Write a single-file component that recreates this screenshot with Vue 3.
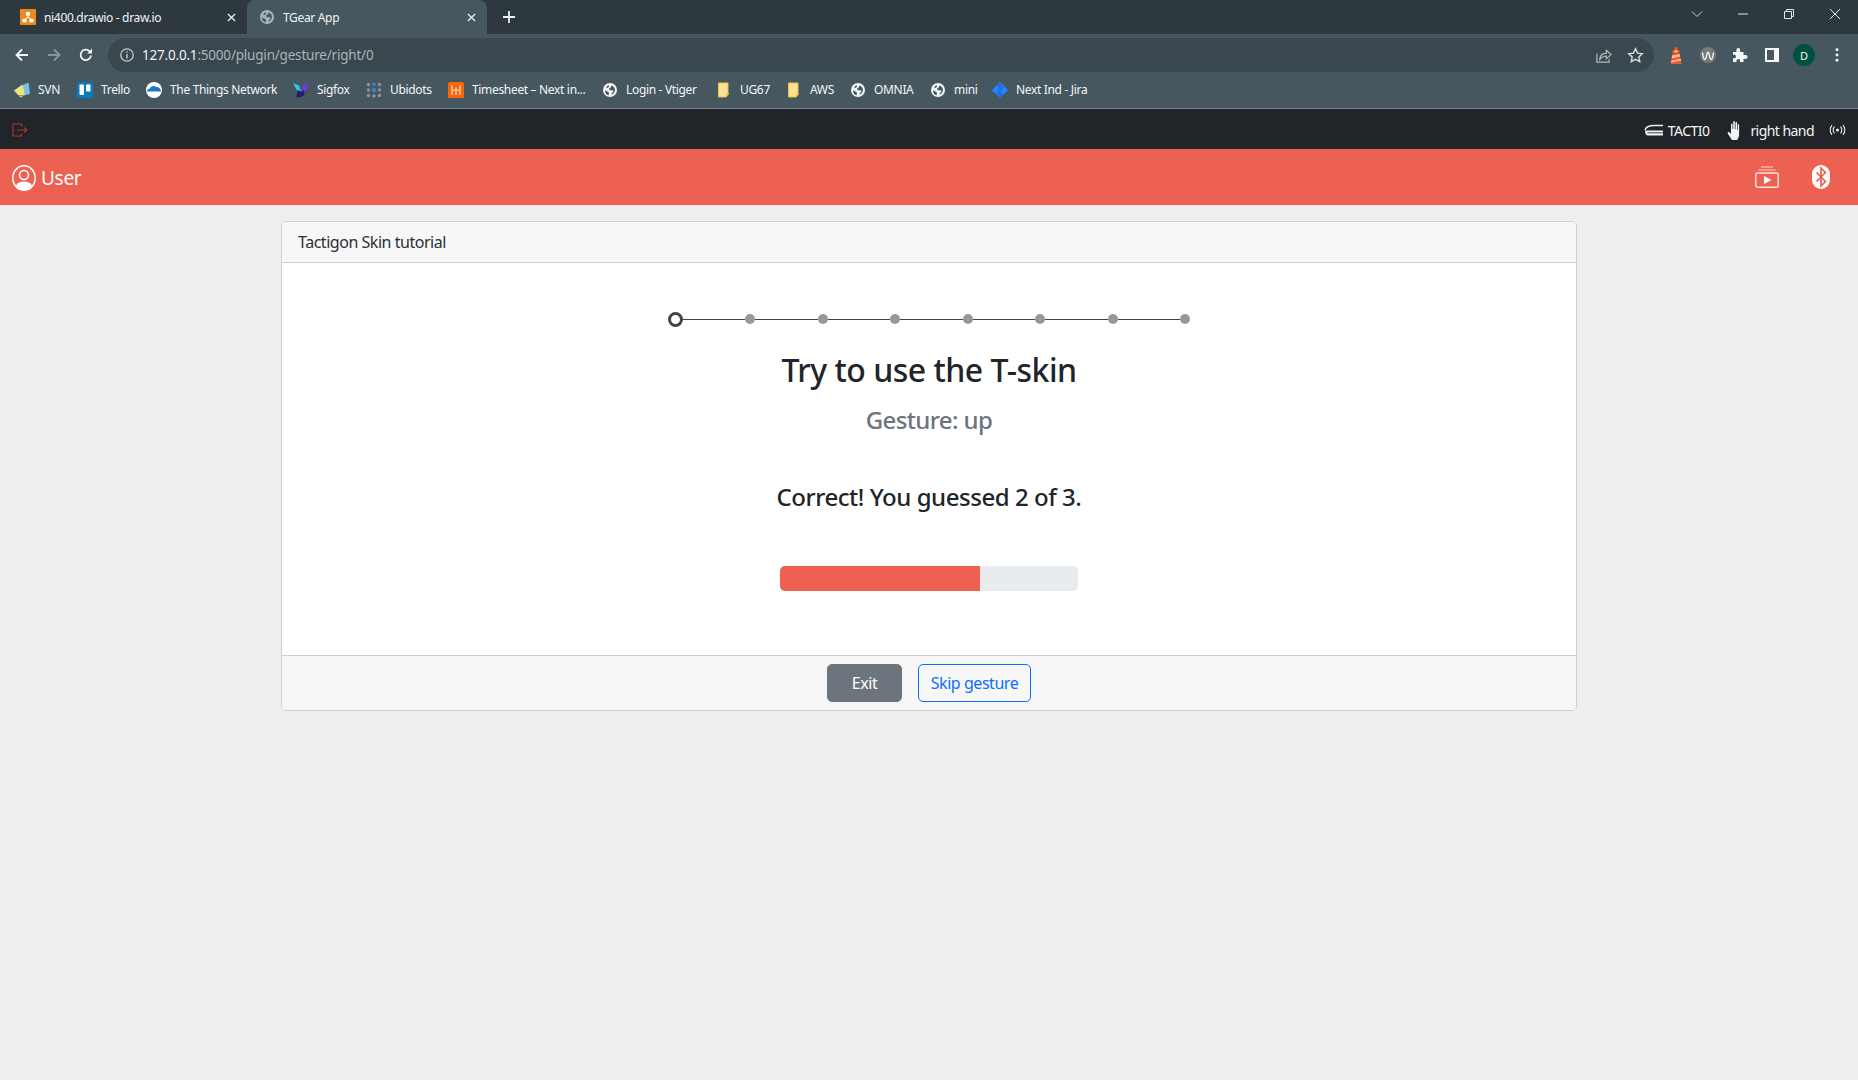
<script setup>
const bookmarks = [
  { name: 'SVN', icon: 'svn', width: 63 },
  { name: 'Trello', icon: 'trello', width: 69 },
  { name: 'The Things Network', icon: 'ttn', width: 147 },
  { name: 'Sigfox', icon: 'sigfox', width: 73 },
  { name: 'Ubidots', icon: 'ubidots', width: 82 },
  { name: 'Timesheet – Next in...', icon: 'hours', width: 154 },
  { name: 'Login - Vtiger', icon: 'globe', width: 114 },
  { name: 'UG67', icon: 'folder', width: 70 },
  { name: 'AWS', icon: 'folder', width: 64 },
  { name: 'OMNIA', icon: 'globe', width: 80 },
  { name: 'mini', icon: 'globe', width: 62 },
  { name: 'Next Ind - Jira', icon: 'jira', width: 120 }
]
const steps = [1, 2, 3, 4, 5, 6, 7]
const globe = 'M8 1a7 7 0 1 0 0 14A7 7 0 0 0 8 1Zm-1 2.2v1.5L5.6 6 4 5.2A5.2 5.2 0 0 1 7 3.2Zm-4 5 2 1.4 1.4.2.6 1.6-.6 2A5.3 5.3 0 0 1 3 8.2Zm6.4 4.6.6-1.8 1.6-1.2-.8-1.6H7.6L7 6.8l1.6-1.4 1-1.8A5.2 5.2 0 0 1 13 8c0 2-1.400 3.800-3.600 4.800Z'
</script>

<template>
  <div class="page">
    <header class="browser">
      <div class="tabstrip">
        <div class="tab">
          <svg class="fav" viewBox="0 0 16 16"><rect width="16" height="16" rx="1" fill="#ee8a1c"/><path d="M8 6v3M4 11l4-3 4 3" fill="none" stroke="#fff" stroke-width="1"/><rect x="6" y="3" width="4" height="3.500" fill="#fff"/><rect x="2.500" y="9.800" width="4" height="3.500" fill="#fff"/><rect x="9.500" y="9.800" width="4" height="3.500" fill="#fff"/></svg>
          <span class="tab-title">ni400.drawio - draw.io</span>
          <svg class="tab-x" viewBox="0 0 10 10"><path d="M1 1l8 8M9 1l-8 8" stroke="#e8eaed" stroke-width="1.500"/></svg>
        </div>
        <div class="tab active">
          <svg class="fav" viewBox="0 0 16 16"><path :d="globe" fill="#a9b3b8" fill-rule="evenodd"/></svg>
          <span class="tab-title">TGear App</span>
          <svg class="tab-x" viewBox="0 0 10 10"><path d="M1 1l8 8M9 1l-8 8" stroke="#e8eaed" stroke-width="1.500"/></svg>
        </div>
        <svg class="newtab" viewBox="0 0 12 12"><path d="M6 0v12M0 6h12" stroke="#eef0f1" stroke-width="1.800"/></svg>
        <div class="winctl">
          <svg viewBox="0 0 12 12" class="wc"><path d="M1 3.500l5 5 5-5" fill="none" stroke="#c8ced1"/></svg>
          <svg viewBox="0 0 12 12" class="wc"><path d="M1 6h10" stroke="#e2e5e7"/></svg>
          <svg viewBox="0 0 12 12" class="wc"><path d="M1.500 3.500h7v7h-7zM3.500 3.500v-2h7v7h-2" fill="none" stroke="#e2e5e7"/></svg>
          <svg viewBox="0 0 12 12" class="wc"><path d="M1 1l10 10M11 1L1 11" stroke="#e2e5e7"/></svg>
        </div>
      </div>

      <div class="toolbar">
        <div class="nav-btns">
          <svg viewBox="0 0 16 16" class="nb"><path d="M14 8H3M8 2.500 2.500 8 8 13.500" fill="none" stroke="#f2f4f5" stroke-width="1.800"/></svg>
          <svg viewBox="0 0 16 16" class="nb"><path d="M2 8h11M8 2.500 13.500 8 8 13.500" fill="none" stroke="#8b969b" stroke-width="1.800"/></svg>
          <svg viewBox="0 0 16 16" class="nb"><path d="M13 8.500A5.200 5.200 0 1 1 11.500 4.200" fill="none" stroke="#f2f4f5" stroke-width="1.800"/><path d="M14 1.500V6.500H9Z" fill="#f2f4f5"/></svg>
        </div>
        <div class="omnibox">
          <svg viewBox="0 0 16 16" class="info"><circle cx="8" cy="8" r="6.200" fill="none" stroke="#c5cbce" stroke-width="1.300"/><path d="M8 7v4.500M8 4.300v1.500" stroke="#c5cbce" stroke-width="1.400"/></svg>
          <span class="url"><b>127.0.0.1</b>:5000/plugin/gesture/right/0</span>
          <svg viewBox="0 0 18 18" class="omni-ic share"><path d="M2 7v9h13v-3" fill="none" stroke="#b9c1c4" stroke-width="1.200"/><path d="M5 13c0-4 3-6.500 7-6.500V3.500l5 4.500-5 4.500V9.500c-3 0-5 1-7 3.500Z" fill="none" stroke="#b9c1c4" stroke-width="1.200"/></svg>
          <svg viewBox="0 0 18 18" class="omni-ic"><path d="M9 1.800l2.200 4.700 5 .6-3.700 3.500 1 5L9 13.100l-4.500 2.500 1-5L1.800 7.100l5-.6Z" fill="none" stroke="#d5dadc" stroke-width="1.500"/></svg>
        </div>
        <div class="ext">
          <svg viewBox="0 0 12 17" class="lighthouse"><path d="M5 0h2l.8 2.500 1.700 1V6h-7V3.500l1.700-1Z" fill="#f0552c"/><rect x="4.500" y="3.500" width="3" height="2" fill="#ffd54a"/><path d="M2.500 6.500h7L11.500 17H.5Z" fill="#f15a30"/><path d="M2.200 8.500 9.700 7l.4 2.600-8.300 2ZM1.300 13.800l9.500-2 .3 1.800-10 2Z" fill="#ffbf9c"/></svg>
          <svg viewBox="0 0 16 16" class="wave"><circle cx="8" cy="8" r="8" fill="#77797a"/><path d="M2.500 5.500c1 8.500 3 8.500 4 3.500s2-5 3 0c1 5 3 5 4-3.500" fill="none" stroke="#f1f1f1" stroke-width="1.400"/></svg>
          <svg viewBox="0 0 16 16" class="puzzle"><path d="M1 5h3.500C4 2.500 5 1 6.300 1s2.300 1.500 1.700 4h3.500v3.300c2.300-.6 4-.3 4 1.700s-1.700 2.300-4 1.700V15H8c.5-2-.5-3-1.700-3s-2.200 1-1.700 3H1v-3.800c2 .5 3-.3 3-1.700S3 7.500 1 8Z" fill="#f5f6f7"/></svg>
          <svg viewBox="0 0 14 14" class="panel"><path fill-rule="evenodd" d="M0 0h14v14H0Zm2 2v10h7V2Z" fill="#f7f8f8"/></svg>
          <span class="avatar">D</span>
          <svg viewBox="0 0 4 16" class="dots"><circle cx="2" cy="2" r="1.700" fill="#f2f4f5"/><circle cx="2" cy="8" r="1.700" fill="#f2f4f5"/><circle cx="2" cy="14" r="1.700" fill="#f2f4f5"/></svg>
        </div>
      </div>

      <div class="bookmarks">
        <div v-for="b in bookmarks" :key="b.name" class="bm" :style="{ width: b.width + 'px' }">
          <svg viewBox="0 0 16 16" class="bm-ic">
            <template v-if="b.icon === 'svn'">
              <path d="M9 3l5.500-2.500L16 12l-7 1.500Z" fill="#74c2ee"/><path d="M0 8.500 8.500 2.500l2.500 10.500H4Z" fill="#eee37f"/><path d="M4 13.500h6l-3 2Z" fill="#cfdc7c"/>
            </template>
            <template v-else-if="b.icon === 'trello'">
              <rect width="16" height="16" rx="2" fill="#0a79bf"/><rect x="2.500" y="2.500" width="4.500" height="10.500" rx=".8" fill="#fff"/><rect x="9" y="2.500" width="4.500" height="7" rx=".8" fill="#fff"/>
            </template>
            <template v-else-if="b.icon === 'ttn'">
              <circle cx="8" cy="8" r="8" fill="#fff"/><path d="M1 9.500c0-2 1.500-3 3-3 .5-2.500 4-3.500 6-1.500 2-.5 5 1 5 4.500Z" fill="#1b77c9"/>
            </template>
            <template v-else-if="b.icon === 'sigfox'">
              <path d="M0 1l6 2.500 2 6L4 8.500Z" fill="#2cc4f0"/><path d="M16 1l-6 2.500L8 9.500l5-1Z" fill="#6a3de8"/><path d="M5 8l3 2 3-2 .5 5L8 15l-5 .5Z" fill="#241a72"/>
            </template>
            <template v-else-if="b.icon === 'ubidots'">
              <g fill="#8b9499"><circle cx="2.500" cy="2.500" r="1.700"/><circle cx="13.500" cy="2.500" r="1.700"/><circle cx="2.500" cy="8" r="1.700"/><circle cx="13.500" cy="8" r="1.700"/><circle cx="2.500" cy="13.500" r="1.700"/><circle cx="13.500" cy="13.500" r="1.700"/><circle cx="8" cy="14" r="1.700"/></g>
              <circle cx="8" cy="2.300" r="1.900" fill="#2f86c9"/><circle cx="8" cy="8" r="2.200" fill="#2f86c9"/>
            </template>
            <template v-else-if="b.icon === 'hours'">
              <rect width="16" height="16" rx="1.500" fill="#f7650f"/><path d="M4 3v10M8 5.500V13M12 3v10M4 8h8" stroke="#ffd9c2" stroke-width="1.200" fill="none"/>
            </template>
            <template v-else-if="b.icon === 'folder'">
              <path d="M2.500 1H12v11l-2 3H2.500Z" fill="#fde293" stroke="#eec13f"/><path d="M10.500 15v-3H13" fill="#eec13f" stroke="#eec13f"/>
            </template>
            <template v-else-if="b.icon === 'jira'">
              <path d="M8 0 16 8 8 16 0 8Z" fill="#2684ff"/><path d="M7.800 5.200 10.500 8l-2.700 2.800L5.200 8Z" fill="#47575f" opacity=".35"/><path d="M8 0 4.500 3.500 9 8 8 9 11.500 5.500ZM8 16l3.500-3.500L7 8l1-1-3.500 3.500Z" fill="#1c6fe8"/>
            </template>
            <path v-else :d="globe" fill="#f5f6f7" fill-rule="evenodd"/>
          </svg>
          <span class="bm-name">{{ b.name }}</span>
        </div>
      </div>
    </header>

    <div class="statusbar">
      <svg viewBox="0 0 16 14" class="exit-ic"><path d="M9.500 3.500V1H1v12h8.500v-2.500" fill="none" stroke="#b5322a" stroke-width="1.100"/><path d="M5 7h10M12 4.500 15 7l-3 2.500" fill="none" stroke="#b5322a" stroke-width="1.100"/></svg>
      <div class="status-right">
        <span class="st">
          <svg viewBox="0 0 20 12" class="tact"><path d="M1 6c1-3 4-4.500 9-4.500h9" fill="none" stroke="#f0f0f0" stroke-width="1.500"/><path d="M1 6.500h18v5H3.500C2 11.500 1 9 1 6.500Z" fill="#f0f0f0"/><path d="M3.500 8.800H19" stroke="#444" stroke-width="1"/></svg>
          TACTI0
        </span>
        <span class="st hand-st">
          <svg viewBox="0 0 16 20" class="hand"><path d="M5 20c-1.500-2-2-3.500-4-6-1-1.500.5-2.500 1.500-1.500L4 14V4.500c0-1.300 1.500-1.300 1.500 0V9h.7V2c0-1.300 1.600-1.300 1.600 0v7h.7V2.800c0-1.300 1.500-1.300 1.500 0V10h.6V5c0-1.300 1.500-1.300 1.500 0v9c0 3-1 4.500-2 6Z" fill="#f4f4f4"/></svg>
          right hand
        </span>
        <svg viewBox="0 0 18 12" class="signal"><circle cx="9" cy="6" r="1.600" fill="#eee"/><path d="M5.800 2.500c-1.600 2-1.600 5 0 7M12.200 2.500c1.600 2 1.600 5 0 7M3.200 1C.6 3.500.6 8.500 3.200 11M14.800 1c2.600 2.500 2.600 7.500 0 10" fill="none" stroke="#e4e4e4" stroke-width="1.200"/></svg>
      </div>
    </div>

    <nav class="appbar">
      <div class="user">
        <svg viewBox="0 0 24 26" class="user-ic"><ellipse cx="12" cy="13" rx="11.200" ry="12.200" fill="none" stroke="#fff" stroke-width="1.500"/><circle cx="12" cy="10" r="4.500" fill="#ec6152" stroke="#fff" stroke-width="1.600"/><path d="M4 20.500c1.500-3 4.500-4 8-4s6.500 1 8 4c-2 2.800-5 4.500-8 4.500s-6-1.700-8-4.500Z" fill="#fff"/></svg>
        <span>User</span>
      </div>
      <div class="app-actions">
        <svg viewBox="0 0 24 22" class="play"><path d="M6 1h12M3.500 4h17" stroke="#f9d8d3" stroke-width="1.200"/><rect x=".8" y="7" width="22.400" height="14.200" rx="1.500" fill="none" stroke="#fbe3df" stroke-width="1.400"/><path d="M9 10l7.500 4L9 18Z" fill="#fff"/></svg>
        <svg viewBox="0 0 18 24" class="bt"><rect width="18" height="24" rx="9" fill="#fff"/><path d="M4.500 7.500l9 9L9 21V3l4.500 4.500-9 9" fill="none" stroke="#ec6152" stroke-width="1.700"/></svg>
      </div>
    </nav>

    <main class="content">
      <section class="card">
        <div class="card-header">Tactigon Skin tutorial</div>
        <div class="card-body">
          <div class="stepper">
            <span class="step current"></span>
            <template v-for="s in steps" :key="s">
              <span class="line"></span>
              <span class="step"></span>
            </template>
          </div>
          <h2 class="title">Try to use the T-skin</h2>
          <h4 class="subtitle">Gesture: up</h4>
          <h4 class="result">Correct! You guessed 2 of 3.</h4>
          <div class="progress"><div class="bar" :style="{ width: '67%' }"></div></div>
        </div>
        <div class="card-footer">
          <button class="btn exit">Exit</button>
          <button class="btn skip">Skip gesture</button>
        </div>
      </section>
    </main>
  </div>
</template>

<style scoped>
.page {
  min-height: 1080px;
  background: #eeeeee;
  font-family: "Noto Sans", "Open Sans", sans-serif;
  color: #212529;
  display: flex;
  flex-direction: column;
}
.browser { display: flex; flex-direction: column; }
.tabstrip {
  height: 34px;
  background: #2e393f;
  display: flex;
  align-items: stretch;
  font-size: 12px;
  color: #f1f3f4;
}
.tab {
  width: 240px;
  padding: 0 8px 0 20px;
  display: flex;
  align-items: center;
  box-sizing: border-box;
}
.tab:first-child { width: 247px; }
.tab.active {
  background: #47575f;
  border-radius: 8px 8px 0 0;
  padding-left: 12px;
}
.fav { width: 16px; height: 16px; flex: none; margin-right: 8px; }
.tab-title { flex: 1; white-space: nowrap; letter-spacing: -0.33px; }
.tab-x { width: 9px; height: 9px; margin-right: 3px; flex: none; }
.newtab { width: 12px; height: 12px; align-self: center; margin-left: 16px; flex: none; }
.winctl {
  margin-left: auto;
  display: flex;
  align-items: flex-start;
  gap: 34px;
  padding: 8px 17px 0 0;
}
.wc { width: 12px; height: 12px; flex: none; }

.toolbar {
  height: 38px;
  background: #47575f;
  display: flex;
  align-items: center;
  box-sizing: border-box;
  padding: 4px 0 0 0;
}
.nav-btns {
  width: 108px;
  flex: none;
  display: flex;
  gap: 16px;
  padding-left: 14px;
  box-sizing: border-box;
  align-items: center;
}
.nb { width: 16px; height: 16px; flex: none; }
.omnibox {
  width: 1546px;
  height: 34px;
  background: #3a474f;
  border-radius: 17px;
  display: flex;
  align-items: center;
  padding: 0 10px 0 11px;
  box-sizing: border-box;
  flex: none;
}
.info { width: 16px; height: 16px; flex: none; margin-right: 7px; }
.url { font-size: 13.500px; color: #a9b3b8; flex: 1; letter-spacing: -0.2px; }
.url b { font-weight: 400; color: #f1f3f4; }
.omni-ic { width: 17px; height: 17px; flex: none; margin-left: 15px; }
.ext {
  flex: 1;
  display: flex;
  align-items: center;
  padding-left: 16px;
}
.lighthouse { width: 12px; height: 17px; flex: none; margin-right: 18px; }
.wave { width: 16px; height: 16px; flex: none; margin-right: 16px; }
.puzzle { width: 16px; height: 16px; flex: none; margin-right: 17px; }
.panel { width: 14px; height: 14px; flex: none; margin-right: 14px; }
.avatar {
  width: 22px;
  height: 22px;
  border-radius: 50%;
  background: #00503f;
  color: #f1f3f4;
  font-size: 11px;
  display: flex;
  align-items: center;
  justify-content: center;
  flex: none;
}
.dots { width: 4px; height: 14px; margin-left: 20px; flex: none; }

.bookmarks {
  height: 37px;
  background: #47575f;
  border-bottom: 1px solid #75828a;
  box-sizing: border-box;
  display: flex;
  align-items: center;
  padding-left: 14px;
  font-size: 12px;
  color: #f4f6f7;
}
.bm { display: flex; align-items: center; flex: none; white-space: nowrap; }
.bm-ic { width: 16px; height: 16px; flex: none; margin-right: 8px; }
.bm-name { letter-spacing: -0.33px; line-height: 16px; margin-top: -1px; }

.statusbar {
  height: 40px;
  background: #212529;
  display: flex;
  align-items: center;
  justify-content: space-between;
  padding: 2px 12px 0;
  box-sizing: border-box;
  color: #f5f5f5;
  font-size: 14px;
}
.exit-ic { width: 16px; height: 14px; }
.status-right { display: flex; align-items: center; }
.st { display: flex; align-items: center; letter-spacing: -0.55px; }
.tact { width: 20px; height: 12px; margin-right: 4px; }
.hand-st { margin-left: 18px; }
.hand { width: 16px; height: 20px; margin-right: 7px; }
.signal { width: 17px; height: 12px; margin-left: 15px; }

.appbar {
  height: 56px;
  background: #ec6152;
  display: flex;
  align-items: center;
  justify-content: space-between;
  padding: 0 28px 0 12px;
  color: #fff;
  box-sizing: border-box;
}
.user { display: flex; align-items: center; gap: 5px; font-size: 19px; letter-spacing: -0.3px; padding-top: 1px; }
.user-ic { width: 24px; height: 26px; }
.app-actions { display: flex; align-items: center; gap: 33px; }
.play { width: 24px; height: 22px; }
.bt { width: 18px; height: 24px; }

.content { display: flex; justify-content: center; padding: 16px 0; width: 1858px; box-sizing: border-box; }
.card {
  width: 1296px;
  height: 490px;
  background: #fff;
  border: 1px solid #cfcfcf;
  border-radius: 5px;
  box-sizing: border-box;
  display: flex;
  flex-direction: column;
  overflow: hidden;
}
.card-header {
  height: 41px;
  background: #f7f7f7;
  border-bottom: 1px solid #cfcfcf;
  box-sizing: border-box;
  padding: 0 16px;
  display: flex;
  align-items: center;
  font-size: 16px;
  letter-spacing: -0.47px;
  color: #2b3035;
}
.card-body {
  flex: 1;
  display: flex;
  flex-direction: column;
  align-items: center;
  padding-top: 48px;
}
.stepper { display: flex; align-items: center; width: 522px; height: 16px; flex: none; }
.step { width: 10px; height: 10px; border-radius: 50%; background: #999; flex: none; }
.step.current { width: 15px; height: 15px; background: #fff; border: 3px solid #444; box-sizing: border-box; }
.line { flex: 1; height: 1px; background: #444; }
.title {
  margin: 23px 0 0;
  font-size: 32px;
  line-height: 40px;
  font-weight: 500;
  letter-spacing: -0.5px;
}
.subtitle {
  margin: 15px 0 0;
  font-size: 24px;
  line-height: 30px;
  font-weight: 500;
  color: #6c757d;
  letter-spacing: -0.6px;
}
.result {
  margin: 47px 0 0;
  font-size: 24px;
  line-height: 30px;
  font-weight: 500;
  letter-spacing: -0.46px;
}
.progress {
  margin-top: 54px;
  width: 298px;
  height: 25px;
  border-radius: 5px;
  background: #e9ecef;
  overflow: hidden;
  flex: none;
}
.bar { height: 100%; background: #ec6152; }
.card-footer {
  height: 55px;
  background: #f7f7f7;
  border-top: 1px solid #cfcfcf;
  box-sizing: border-box;
  display: flex;
  align-items: center;
  justify-content: center;
  gap: 16px;
}
.btn {
  height: 38px;
  font: inherit;
  font-size: 16px;
  letter-spacing: -0.45px;
  border-radius: 5px;
  box-sizing: border-box;
  padding: 0;
}
.exit { width: 75px; background: #6c757d; color: #fff; border: 1px solid #6c757d; }
.skip { width: 113px; background: transparent; color: #0d6efd; border: 1px solid #0d6efd; }
</style>

<style>
html, body { margin: 0; background: #eeeeee; }
</style>
